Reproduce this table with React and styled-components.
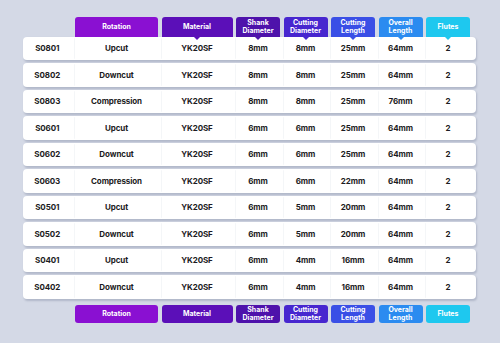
import styled, { createGlobalStyle } from "styled-components";

const Global = createGlobalStyle`
  body{
    margin:0;
    background:#d4d9e6;
    font-family:Inter,"Liberation Sans",sans-serif;
  }
`

const cols = [
  { label: "Rotation", color: "#8a10d2", pointer: false },
  { label: "Material", color: "#5b0fb8", pointer: true },
  { label: "Shank\nDiameter", color: "#4e12ab", pointer: true },
  { label: "Cutting\nDiameter", color: "#4726cf", pointer: true },
  { label: "Cutting\nLength", color: "#3a4fe6", pointer: true },
  { label: "Overall\nLength", color: "#2b8bf0", pointer: true },
  { label: "Flutes", color: "#1ec8ef", pointer: true },
]

const rows = [
  ["S0801", "Upcut", "YK20SF", "8mm", "8mm", "25mm", "64mm", "2"],
  ["S0802", "Downcut", "YK20SF", "8mm", "8mm", "25mm", "64mm", "2"],
  ["S0803", "Compression", "YK20SF", "8mm", "8mm", "25mm", "76mm", "2"],
  ["S0601", "Upcut", "YK20SF", "6mm", "6mm", "25mm", "64mm", "2"],
  ["S0602", "Downcut", "YK20SF", "6mm", "6mm", "25mm", "64mm", "2"],
  ["S0603", "Compression", "YK20SF", "6mm", "6mm", "22mm", "64mm", "2"],
  ["S0501", "Upcut", "YK20SF", "6mm", "5mm", "20mm", "64mm", "2"],
  ["S0502", "Downcut", "YK20SF", "6mm", "5mm", "20mm", "64mm", "2"],
  ["S0401", "Upcut", "YK20SF", "6mm", "4mm", "16mm", "64mm", "2"],
  ["S0402", "Downcut", "YK20SF", "6mm", "4mm", "16mm", "64mm", "2"],
]

function Tabs({ bottom }) {
  return (
    <TabRow $bottom={bottom}>
      <span />
      {cols.map((c, i) => (
        <Tab key={i} $color={c.color} $bottom={bottom} $pointer={c.pointer && !bottom}>
          {c.label}
        </Tab>
      ))}
    </TabRow>
  )
}

export default function App() {
  return (
    <Page>
      <Global />
      <Tabs />
      <Rows>
        {rows.map((r, i) => (
          <Row key={i}>
            {r.map((v, j) => (
              <Cell key={j} $first={j === 0}>{v}</Cell>
            ))}
          </Row>
        ))}
      </Rows>
      <Tabs bottom />
    </Page>
  )
}

const grid = `
  display:grid;
  grid-template-columns:48.5px 83px 71px repeat(5,44px);
  column-gap:3.5px;
`

const Page = styled.div`
  width:500px;
  height:343px;
  box-sizing:border-box;
  padding:17px 0 0 23px;
  overflow:hidden;
`
const TabRow = styled.div`
  ${grid}
  height:${p => (p.$bottom ? "18px" : "19.7px")};
  margin-top:${p => (p.$bottom ? "6px" : "0")};
  position:relative;
  z-index:2;
`
const Tab = styled.div`
  position:relative;
  background:${p => p.$color};
  border-radius:${p => (p.$bottom ? "3px" : "3px 3px 0 0")};
  color:#fff;
  font-size:7px;
  font-weight:700;
  line-height:8px;
  white-space:pre-line;
  display:flex;
  align-items:center;
  justify-content:center;
  text-align:center;
  &::after{
    content:"";
    display:${p => (p.$pointer ? "block" : "none")};
    position:absolute;
    left:50%;
    bottom:-3px;
    margin-left:-3px;
    border-left:3px solid transparent;
    border-right:3px solid transparent;
    border-top:3px solid ${p => p.$color};
  }
`
const Rows = styled.div`
  display:flex;
  flex-direction:column;
  gap:3px;
  width:453px;
`
const Row = styled.div`
  ${grid}
  height:23.5px;
  background:#fff;
  border-radius:4px;
  box-shadow:1px 1.5px 2px rgba(90,100,130,0.28);
`
const Cell = styled.div`
  display:flex;
  align-items:center;
  justify-content:center;
  font-size:8px;
  font-weight:700;
  color:#1b1b22;
  letter-spacing:-0.1px;
  ${p => p.$first ? "" : "box-shadow:-1.75px 0 0 -1.2px #eceef3;"}
`
